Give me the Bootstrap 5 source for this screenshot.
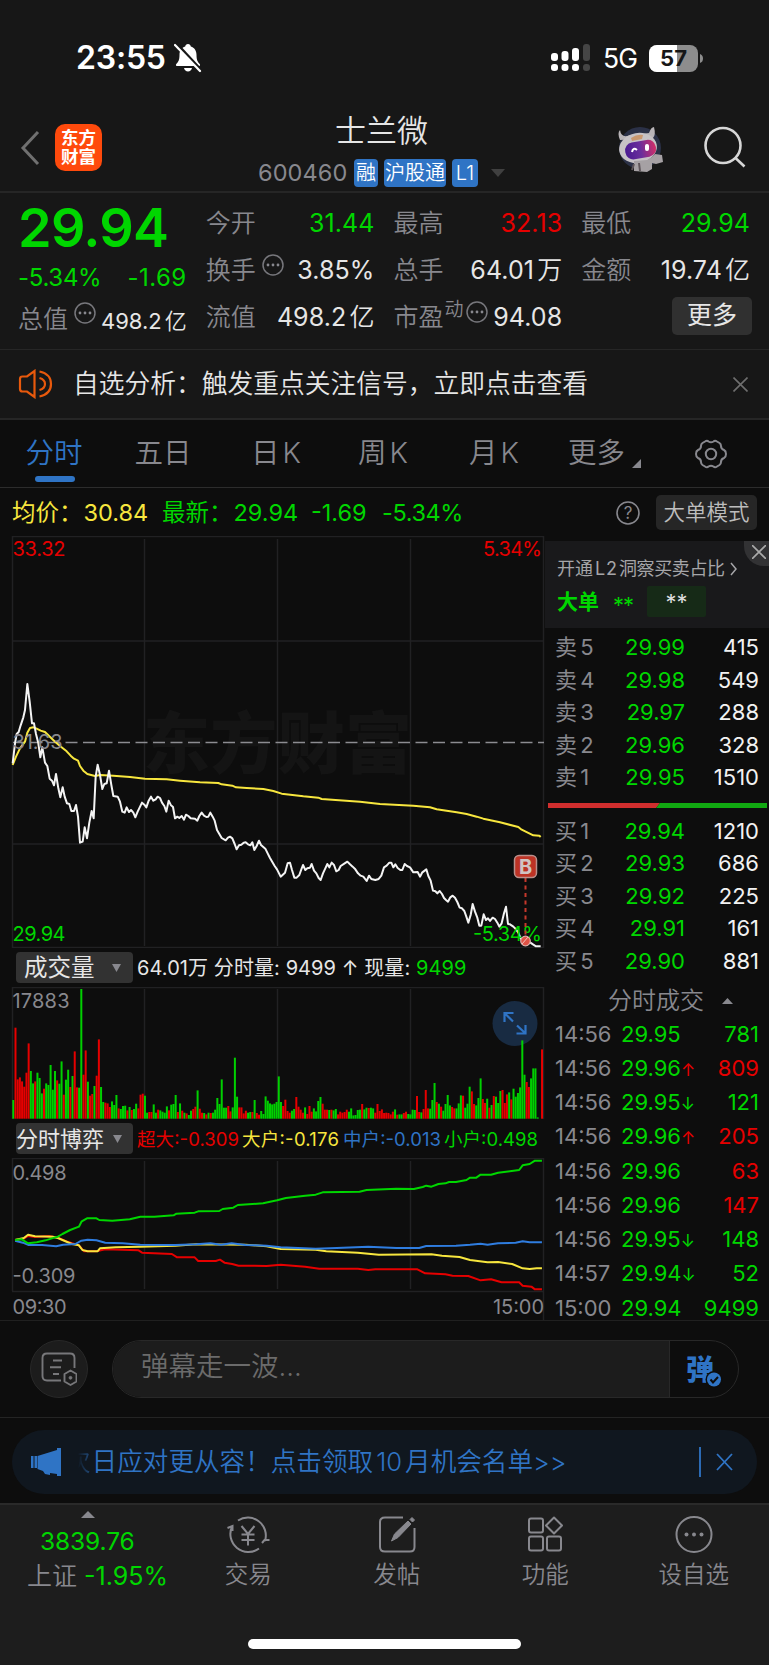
<!doctype html>
<html lang="zh-CN">
  <head>
    <meta charset="UTF-8">
    <meta name="viewport" content="width=device-width, initial-scale=1.0">
    <title>士兰微 600460</title>
    <link href="https://cdn.jsdelivr.net/npm/bootstrap@5.3.0/dist/css/bootstrap.min.css" rel="stylesheet">
    <style>
      body {
        background: #0d0d0d;
        color: #e6e6e6;
        font-family: Inter, "Noto Sans CJK SC", sans-serif;
        font-size: 25px;
        line-height: 1;
        overflow: hidden;
      }
      svg { display: block; flex: none; }
      svg text { font-family: Inter, "Noto Sans CJK SC", sans-serif; }
      .up { color: #e60000; }
      .down { color: #00d600; }
      .muted { color: #88888e; }
      .blue { color: #2f74c5; }
      .yellow { color: #f7e63e; }
      .panel { background: #171717; }

      /* durum + başlık */
      .status-bar { height: 108px; padding: 8px 66px 0 76px; }
      .clock { font-size: 32px; font-weight: 600; letter-spacing: -.2px; }
      .net { font-size: 26.5px; letter-spacing: -1px; margin: 1px 12px 0; }
      .title-bar { height: 85px; border-bottom: 2px solid #262626; padding: 0 23px 0 20px; }
      .logo { width: 47px; height: 47px; border-radius: 10px; background: #ff4a0c; color: #fff; font-weight: 700; font-size: 17.5px; line-height: 19px; padding-top: 4px; margin: 16px 0 0 14px; }
      .stock-name { font-size: 31px; line-height: 34px; font-weight: 350; padding: 6px 0 0 77px; }
      .code { font-size: 23.5px; letter-spacing: .1px; width: 96px; }
      .tag { background: #2f74c5; color: #fff; border-radius: 4px; height: 28px; line-height: 28px; font-size: 20px; font-weight: 350; }

      /* fiyat paneli */
      .quote { height: 157px; padding: 7px 19px 0 18px; gap: 19px; border-bottom: 1px solid #262626; }
      .quote > div { flex: 1 1 0; min-width: 0; }
      .q-row { height: 47px; display: flex; align-items: center; justify-content: space-between; font-size: 25px; letter-spacing: .1px; white-space: nowrap; }
      .q-row .muted { font-weight: 350; letter-spacing: 0; }
      .unit { margin-left: 3px; font-weight: 350; }
      .q-price { font-size: 54px; font-weight: 600; height: 54px; line-height: 56px; letter-spacing: -.7px; }
      .more-btn { width: 80px; height: 38px; line-height: 37px; background: #303030; border-radius: 5px; font-size: 25px; margin: 3px -2px 0 0; }

      .notice { height: 70px; border-bottom: 2px solid #262626; padding: 0 21px 0 18px; }
      .notice-text { font-size: 25.75px; margin-left: 20px; font-weight: 350; }

      .tabs { height: 68px; display: grid; grid-template-columns: 108px 110px 116px 98px 124px 97px 116px; border-bottom: 1px solid #2c2c2c; font-size: 28.5px; font-weight: 350; }
      .tabs > div { display: flex; align-items: center; justify-content: center; position: relative; }
      .tabs .active::after { content: ""; position: absolute; left: 35px; bottom: 5px; width: 40px; height: 6px; border-radius: 3px; background: #2f74c5; }

      .avg-line { height: 48px; padding: 1px 12px 0; font-size: 23.5px; white-space: pre; }
      .mode-btn { width: 101px; height: 35px; line-height: 34px; background: #262626; border-radius: 5px; font-size: 21.5px; font-weight: 350; color: #bdbdbd; }

      /* grafikler */
      .charts { width: 545px; flex: none; }
      .chart-head { height: 39px; padding-left: 16px; white-space: pre; font-size: 20px; }
      .picker { width: 117px; height: 31px; background: #323232; border-radius: 4px; font-size: 23.5px; }
      .vol-text { margin-left: 4px; letter-spacing: .08px; }
      .grid { stroke: #212123; stroke-width: 1.5; fill: none; }
      .line { fill: none; stroke-width: 2; stroke-linejoin: round; vector-effect: non-scaling-stroke; }

      /* emir defteri */
      .book { width: 224px; flex: none; }
      .l2 { height: 87px; margin-top: 5px; background: #19191b; padding: 14px 0 0 12px; position: relative; }
      .l2-close { position: absolute; right: 0; top: 0; width: 25px; height: 25px; background: #323234; border-bottom-left-radius: 20px; }
      .l2-box { width: 59px; height: 31px; line-height: 33px; background: #162a17; color: #ddd; border-radius: 2px; font-size: 22px; }
      .b-row { height: 32.5px; padding: 0 10px; font-size: 22px; color: #f2f2f2; display: flex; align-items: center; }
      .b-row span:nth-child(1) { width: 56px; word-spacing: -3px; }
      .b-row span:nth-child(2) { width: 74px; text-align: right; }
      .b-row span:nth-child(3) { flex: 1; text-align: right; }
      .b-row.t-row { height: 34.25px; }
      .t-row span:nth-child(1) { width: 66px; }
      .t-row span:nth-child(2) { width: auto; text-align: left; }
      .arrow { font-size: 17px; }
      .trades-head { height: 31px; margin-top: 8.5px; font-size: 24px; font-weight: 350; padding-left: 27px; }
      #trades { margin-bottom: -4.75px; }

      .danmu { height: 98px; border-top: 1px solid #202020; border-bottom: 1px solid #242424; padding: 0 30px; }
      .round-btn { width: 58px; height: 58px; background: #1c1c1c; border: 1px solid #282828; }
      .danmu-pill { width: 627px; height: 58px; border: 1px solid #282828; background: #0d0d0d; overflow: hidden; }
      .danmu-input { width: 558px; height: 56px; line-height: 51px; padding-left: 28px; background: #1c1c1c; color: #6b6b6b; font-size: 27.5px; font-weight: 350; border-right: 1px solid #282828; }

      .banner-wrap { height: 85px; padding: 12px 12px 0; }
      .banner { height: 64px; background: #10171f; padding: 0 23px 0 19px; }
      .banner-text { font-size: 25.6px; font-weight: 350; white-space: nowrap; }
      .fade-char { margin-left: 2px; -webkit-mask: linear-gradient(to right, transparent 50%, rgba(0,0,0,.6)); }

      .bottom-nav { height: 162px; background: #1d1d1d; border-top: 2px solid #2a2a2a; display: grid; grid-template-columns: 174px repeat(4, 148.5px); grid-template-rows: 98px 1fr; font-size: 23.5px; color: #88888e; }
      .nav-cell { display: flex; flex-direction: column; align-items: center; padding-top: 10px; font-weight: 350; }
      .nav-cell span { margin-top: 8px; }
      .index-value { margin: 11px 0 0 40px; font-size: 24.5px; letter-spacing: -.1px; }
      .index-rate { margin: 10px 0 0 27px; font-size: 25px; white-space: nowrap; }
      .home-bar { grid-column: 1 / -1; width: 273px; height: 10px; border-radius: 5px; background: #fff; margin: 36px 0 0 248px; }
    </style>
  </head>
  <body>

    <div class="panel">
      <div class="status-bar d-flex align-items-center text-white">
        <span class="clock">23:55</span>
        <svg class="ms-2" width="28" height="30" viewBox="0 0 28 30">
          <path d="M14 1c1.600 0 2.600 1 2.800 2.500 3.700 1.200 5.700 4.300 5.700 8.200 0 5.300 1.200 7.300 3.200 9.200.8.800.300 2.100-.9 2.100H3.200c-1.200 0-1.700-1.300-.9-2.100 2-1.900 3.200-3.900 3.200-9.200 0-3.900 2-7 5.700-8.200C11.400 2 12.400 1 14 1z" fill="#fff"/>
          <path d="M10 25h8c-.5 2.200-2 3.500-4 3.500s-3.500-1.300-4-3.500z" fill="#fff"/>
          <path d="M3 1l25 27" stroke="#171717" stroke-width="2.600"/>
          <path d="M1 2l25 26" stroke="#fff" stroke-width="2.200" stroke-linecap="round"/>
        </svg>
        <svg class="ms-auto" width="40" height="28" viewBox="0 0 40 28">
          <g fill="#fff"><rect x="0" y="9" width="7" height="8" rx="3"/><rect x="0" y="20" width="7" height="7" rx="3"/><rect x="10.500" y="7" width="7" height="10" rx="3"/><rect x="10.500" y="20" width="7" height="7" rx="3"/><rect x="21" y="4" width="7" height="13" rx="3"/><rect x="21" y="20" width="7" height="7" rx="3"/></g>
          <g fill="#454545"><rect x="32" y="0" width="7" height="17" rx="3"/><rect x="32" y="20" width="7" height="7" rx="3"/></g>
        </svg>
        <span class="net">5G</span>
        <svg width="54" height="27" viewBox="0 0 54 27">
          <clipPath id="bat"><rect width="49" height="27" rx="8"/></clipPath>
          <g clip-path="url(#bat)"><rect width="49" height="27" fill="#8d8d8d"/><rect width="28" height="27" fill="#fff"/></g>
          <path d="M51 9q3 1 3 4.500T51 18z" fill="#8d8d8d"/>
          <text x="11" y="21" font-size="21" font-weight="700" fill="#171717" textLength="27" lengthAdjust="spacingAndGlyphs">57</text>
        </svg>
      </div>

      <div class="title-bar d-flex">
        <svg width="21" height="36" viewBox="0 0 21 36" style="margin-top:22px"><path d="M18 2L3 18l15 16" fill="none" stroke="#707070" stroke-width="3"/></svg>
        <div class="logo text-center">东方<br>财富</div>
        <div class="flex-grow-1" style="padding-left:156px">
          <div class="stock-name">士兰微</div>
          <div class="d-flex align-items-center muted" style="margin-top:11px">
            <span class="code">600460</span>
            <span class="tag text-center" style="width:24px">融</span>
            <span class="tag text-center" style="width:62px;margin:0 6px">沪股通</span>
            <span class="tag text-center" style="width:26px">L1</span>
            <svg width="14" height="8" style="margin-left:13px"><path d="M0 0h14L7 8z" fill="#404040"/></svg>
          </div>
        </div>
        <svg width="48" height="46" viewBox="0 0 48 46" style="margin:18px 39px 0 0">
          <circle cx="23" cy="22" r="21" fill="#2b3147"/>
          <path d="M3 14Q0 7 3 4q1 7 7 6l22-3q2-6 5-6 2 8-1 11z" fill="#b9b5b8"/>
          <ellipse cx="21" cy="22" rx="19" ry="15" transform="rotate(-10 21 22)" fill="#c6c2c5"/>
          <path d="M14 12q6-4 12-3l-1 4-10 2z" fill="#c9986f"/>
          <defs><linearGradient id="visor" x1="0" x2="1"><stop offset="0" stop-color="#4a1a91"/><stop offset=".5" stop-color="#6a2f9c"/><stop offset="1" stop-color="#d32e68"/></linearGradient></defs>
          <rect x="8" y="15" width="31" height="17" rx="8" transform="rotate(-10 24 23)" fill="url(#visor)"/>
          <path d="M15 26q1-5 5-2" fill="none" stroke="#fff" stroke-width="2"/><rect x="28" y="18" width="4" height="7" rx="2" fill="#fff"/>
          <path d="M17 35l13-1 5-3 3-3 7 1 1 7-7 2-4-1v6l-5 3-13-1z" fill="#a6a1a4"/>
          <path d="M17 38l-2 6M22 37l1 8" stroke="#5f565a" stroke-width="2"/>
        </svg>
        <svg width="42" height="43" viewBox="0 0 42 43" style="margin-top:18px"><circle cx="19" cy="19.500" r="17.500" fill="none" stroke="#d6d6d6" stroke-width="2.600"/><path d="M31.500 32l9 8.500" stroke="#d6d6d6" stroke-width="2.600"/></svg>
      </div>

      <div class="quote d-flex">
        <div>
          <div class="q-price down">29.94</div>
          <div class="q-row down" style="font-size:24px"><span style="letter-spacing:-.3px">-5.34%</span><span style="letter-spacing:.5px">-1.69</span></div>
          <div class="q-row" style="height:36px"><span class="muted">总值</span><svg width="24" height="24" viewBox="0 0 24 24" style="margin:-12px 2px 0 2px"><use href="#dots"/></svg><span style="font-size:22px;padding-top:4px;letter-spacing:0">498.2<span class="unit">亿</span></span></div>
        </div>
        <div>
          <div class="q-row"><span class="muted">今开</span><span class="down">31.44</span></div>
          <div class="q-row"><span class="muted">换手</span><svg class="me-auto" width="24" height="24" viewBox="0 0 24 24" style="margin:-12px 0 0 5px"><use href="#dots"/></svg><span>3.85%</span></div>
          <div class="q-row"><span class="muted">流值</span><span>498.2<span class="unit">亿</span></span></div>
        </div>
        <div>
          <div class="q-row"><span class="muted">最高</span><span class="up">32.13</span></div>
          <div class="q-row"><span class="muted">总手</span><span>64.01<span class="unit">万</span></span></div>
          <div class="q-row"><span class="muted">市盈</span><span class="muted" style="font-size:19px;margin:-16px 0 0 1px">动</span><svg width="24" height="24" viewBox="0 0 24 24" style="margin:-11px auto 0 1px"><use href="#dots"/></svg><span>94.08</span></div>
        </div>
        <div>
          <div class="q-row"><span class="muted">最低</span><span class="down">29.94</span></div>
          <div class="q-row"><span class="muted">金额</span><span>19.74<span class="unit">亿</span></span></div>
          <div class="more-btn text-center ms-auto">更多</div>
        </div>
      </div>

      <div class="notice d-flex align-items-center">
        <svg width="35" height="30" viewBox="0 0 35 30" fill="none" stroke="#e8590c" stroke-width="2.200"><path d="M16.500 2v26L9 22.500H4.500Q2 22.500 2 20V10q0-2.500 2.500-2.500H9zM21.500 9q5.500 1.500 5.500 6t-5.500 6M21.500 2.500Q33 5 33 15T21.500 27.500"/></svg>
        <span class="notice-text">自选分析：触发重点关注信号，立即点击查看</span>
        <svg class="ms-auto" width="15" height="15" viewBox="0 0 15 15"><path d="M.5.500l14 14M14.500.500l-14 14" stroke="#6e6e6e" stroke-width="1.600"/></svg>
      </div>
    </div>

    <div class="tabs muted">
      <div class="active blue">分时</div>
      <div>五日</div>
      <div>日<span style="margin-left:3px">K</span></div>
      <div>周<span style="margin-left:3px">K</span></div>
      <div>月<span style="margin-left:3px">K</span></div>
      <div>更多<svg width="9" height="9" style="margin:19px 0 0 7px"><path d="M9 0v9H0z" fill="#88888e"/></svg></div>
      <div><svg width="32" height="30" viewBox="0 0 32 30" fill="none" stroke="#88888e" stroke-width="2"><path d="M10 2.500Q12 1 13.500 2.500q2.500 1.500 5 0Q20 1 22 2.500l2.500 1.500q1.500 1 1.500 3 0 3 3 4 2 1 2 4t-2 4q-3 1-3 4 0 2-1.500 3L22 27.500q-2 1.500-3.500 0-2.500-1.500-5 0-1.500 1.500-3.500 0L7.500 26Q6 25 6 23q0-3-3-4-2-1-2-4t2-4q3-1 3-4 0-2 1.500-3z"/><circle cx="16" cy="15" r="5.200"/></svg></div>
    </div>

    <div class="avg-line d-flex align-items-center">
      <span class="yellow" style="width:150px">均价：<span style="margin-left:1px">30.84</span></span><span class="down" style="width:149px">最新：<span style="margin-left:1px">29.94</span></span><span class="down" style="width:71px">-1.69</span><span class="down" style="letter-spacing:-.4px">-5.34%</span>
      <svg class="ms-auto" width="24" height="24" viewBox="0 0 24 24" style="margin-right:16px"><circle cx="12" cy="12" r="11" fill="none" stroke="#88888e" stroke-width="1.600"/><text x="12" y="18" text-anchor="middle" font-size="17" fill="#88888e">?</text></svg>
      <div class="mode-btn text-center">大单模式</div>
    </div>

    <div class="d-flex">
      <div class="charts">
        <!-- dakikalık fiyat -->
        <svg width="545" height="412" viewBox="0 536 545 412">
          <text x="143" y="768" font-size="67" font-weight="900" fill="#141414" textLength="269">东方财富</text>
          <path class="grid" d="M12 536.500h532M12.500 536v412M12 947.500h532M543.500 536v412M12 641h531M12 844h531M144.500 539v407M277.500 539v407M410.500 539v407"/>
          <path d="M12 742.500h532" stroke="#8c8c91" stroke-width="1.600" stroke-dasharray="12 5.500" stroke-dashoffset="-1"/>
          <g transform="translate(0 530) scale(.33333)">
            <polyline class="line" stroke="#f7e63e" points="38,705 48,680 60,655 75,635 82,608 90,594 100,592 110,596 122,602 135,606 148,619 162,632 180,648 200,664 212,677 222,686 234,692 240,708 250,722 262,732 285,738 300,735 340,737 390,741 435,746 500,748 540,752 600,757 655,759 665,763 697,767 708,772 740,774 790,777 820,783 845,791 910,799 955,803 965,807 1080,815 1140,822 1240,827 1290,832 1310,838 1370,847 1400,852 1430,860 1450,866 1500,877 1555,891 1565,899 1600,916 1618,917 1622,921"/>
            <polyline class="line" stroke="#f4f4f4" points="38,700 45,640 50,612 56,606 62,586 70,562 75,540 82,462 89,515 96,580 102,580 108,612 115,640 121,682 127,652 135,698 142,708 149,746 156,752 162,766 168,732 175,775 181,802 188,772 194,800 201,820 208,822 214,843 222,843 228,825 234,860 240,938 248,935 254,892 261,925 268,878 275,843 281,865 287,740 293,704 300,735 307,777 313,762 320,760 327,722 334,765 340,798 353,800 360,815 367,845 374,848 380,832 387,846 393,840 400,848 406,862 413,845 426,818 433,824 439,832 446,812 453,800 460,812 467,808 473,800 480,804 486,818 493,828 499,845 506,812 513,826 519,831 525,865 532,860 538,864 545,858 552,869 558,854 565,858 572,865 585,866 592,872 598,858 605,848 612,857 619,861 625,860 631,848 638,860 644,872 651,900 658,912 665,924 677,931 684,923 690,920 697,925 704,942 710,958 717,946 724,944 731,938 737,937 744,943 751,946 757,937 763,960 770,948 777,932 783,945 796,956 803,970 810,984 817,996 824,1008 831,1018 842,1040 855,1028 863,1000 870,998 876,1020 883,1043 890,1043 898,1035 904,1018 909,1005 916,1020 922,1015 930,1013 935,1002 942,1022 949,1030 956,1044 962,1050 969,1030 976,1015 982,1002 988,1012 995,998 1002,1005 1009,1024 1016,1020 1022,1008 1034,1000 1042,995 1050,1003 1058,1010 1066,1018 1074,1030 1082,1037 1090,1040 1100,1053 1107,1037 1114,1047 1126,1050 1136,1047 1144,1037 1152,1012 1160,1007 1168,998 1174,998 1180,1012 1186,1003 1193,1014 1201,1020 1207,1020 1214,1002 1221,1008 1230,1012 1240,1027 1253,1026 1260,1040 1267,1027 1279,1018 1285,1038 1292,1052 1299,1082 1306,1084 1312,1090 1319,1083 1326,1092 1332,1104 1338,1110 1344,1115 1351,1102 1358,1097 1365,1103 1372,1116 1379,1133 1386,1135 1393,1143 1399,1160 1405,1178 1412,1155 1418,1122 1425,1145 1432,1163 1438,1187 1444,1187 1451,1153 1458,1170 1464,1165 1470,1173 1478,1163 1485,1167 1492,1178 1498,1190 1505,1180 1512,1150 1518,1130 1524,1182 1530,1183 1540,1190 1548,1198 1555,1208 1562,1225 1570,1235 1590,1237 1600,1244 1608,1249 1622,1249"/>
          </g>
          <g font-size="20">
            <text x="12.500" y="556" fill="#e60000" textLength="53">33.32</text>
            <text x="542" y="556" fill="#e60000" text-anchor="end" textLength="59">5.34%</text>
            <text x="12.500" y="749" fill="#88888e" textLength="50">31.63</text>
            <text x="12.500" y="941" fill="#00d600" textLength="53">29.94</text>
            <text x="542" y="941" fill="#00d600" text-anchor="end" textLength="69">-5.34%</text>
          </g>
          <path d="M525.500 878v58" stroke="#c5382c" stroke-width="2" stroke-dasharray="4 3.500"/>
          <rect x="514.500" y="855.500" width="22" height="22" rx="4.500" fill="#bd3325" stroke="#b9908c" stroke-width="1.500"/>
          <text x="525.500" y="873.500" text-anchor="middle" font-size="20" font-weight="700" fill="#d0c3c2">B</text>
          <circle cx="525.500" cy="941" r="4.800" fill="#e05245" stroke="#ddb0ab" stroke-width="1.200"/><path d="M522 944l6-7" stroke="#f3c2bd"/>
        </svg>

        <div class="chart-head d-flex align-items-center">
          <div class="picker d-flex align-items-center justify-content-between px-2"><span style="white-space:nowrap">成交量</span><svg width="9" height="9" class="me-1"><path d="M0 1h9L4.500 9z" fill="#88888e"/></svg></div><span class="vol-text">64.01万 分时量: 9499 ↑ 现量: <span class="down">9499</span></span>
        </div>

        <!-- hacim -->
        <svg width="545" height="132" viewBox="0 987 545 132">
          <path class="grid" d="M12 987.500h532M12.500 987v132M543.500 987v132M144.500 989v128M277.500 989v128M410.500 989v128"/>
          <text x="12.500" y="1008" font-size="20" fill="#88888e" textLength="57">17883</text>
          <circle cx="515" cy="1023.500" r="22.500" fill="#182b42"/>
          <path d="M504.500 1022v-9h9M505.500 1014l7.500 7.500M525.500 1025v8.500h-9M517 1025.500l7.500 7" fill="none" stroke="#2f74c5" stroke-width="2.200"/>
          <g id="volBars"></g>
        </svg>

        <div class="chart-head d-flex align-items-center">
          <div class="picker d-flex align-items-center justify-content-between" style="font-size:22px"><span>分时博弈</span><svg width="9" height="9" style="margin-right:11px"><path d="M0 1h9L4.500 9z" fill="#88888e"/></svg></div><svg width="406" height="30" viewBox="0 0 406 30" style="margin-left:4px" font-size="18.500"><text x="0" y="22" fill="#e60000" textLength="102">超大:-0.309</text><text x="105" y="22" fill="#f7e63e" textLength="97">大户:-0.176</text><text x="206" y="22" fill="#2f74c5" textLength="98">中户:-0.013</text><text x="307" y="22" fill="#00d600" textLength="94">小户:0.498</text></svg>
        </div>

        <!-- sermaye akışı -->
        <svg width="545" height="162" viewBox="0 1158 545 162">
          <path class="grid" d="M12 1158.500h532M12.500 1158v133M12 1291.500h532M543.500 1158v162M144.500 1161v128M277.500 1161v128M410.500 1161v128"/>
          <g transform="translate(0 1120) scale(.35077 .33333)">
            <polyline class="line" stroke="#e60000" points="43,360 68,356 80,348 100,351 140,348 165,353 190,364 225,376 240,394 275,394 300,388 395,391 405,398 490,402 505,412 555,412 565,423 615,423 627,419 640,428 662,432 680,437 760,438 800,434 870,440 910,446 1020,446 1050,450 1070,448 1190,448 1212,460 1270,463 1290,467 1335,468 1370,481 1400,478 1430,487 1480,487 1490,497 1515,500 1525,508 1545,508"/>
            <polyline class="line" stroke="#f7e63e" points="43,360 68,354 80,344 100,349 150,350 165,354 178,360 205,372 225,376 235,390 250,394 278,394 285,385 330,382 400,380 500,377 560,373 700,374 760,379 800,387 900,389 930,394 1020,398 1080,404 1230,403 1260,407 1310,411 1340,420 1390,427 1420,426 1460,432 1490,445 1510,447 1530,445 1545,445"/>
            <polyline class="line" stroke="#2f7de0" points="43,362 65,368 82,375 120,375 160,379 180,374 215,372 232,362 250,359 275,361 300,368 350,370 400,374 500,375 560,373 600,370 630,374 660,370 700,375 760,377 800,382 900,386 960,384 1050,380 1130,384 1195,384 1215,378 1300,377 1340,374 1370,371 1390,374 1420,370 1470,368 1490,364 1510,367 1545,367"/>
            <polyline class="line" stroke="#00d600" points="43,360 62,358 80,370 105,367 130,361 155,353 165,350 178,342 200,330 225,320 233,304 248,295 275,295 283,300 320,302 370,298 400,290 440,290 495,286 503,281 555,278 565,274 625,273 635,267 665,263 678,255 750,250 790,241 815,234 870,227 900,224 920,217 1025,215 1045,210 1130,206 1180,207 1205,201 1215,197 1230,200 1250,192 1270,190 1280,186 1300,186 1330,180 1340,173 1358,173 1370,164 1400,164 1420,158 1480,150 1490,136 1510,132 1525,122 1545,122"/>
          </g>
          <g font-size="20" fill="#88888e">
            <text x="12.500" y="1180" textLength="54">0.498</text>
            <text x="12.500" y="1283" textLength="63">-0.309</text>
            <text x="12.500" y="1314" textLength="54">09:30</text>
            <text x="544" y="1314" text-anchor="end" textLength="51">15:00</text>
          </g>
        </svg>
      </div>

      <div class="book">
        <div class="l2">
          <div class="l2-close d-flex align-items-center justify-content-center"><svg width="14" height="14" viewBox="0 0 14 14" style="margin-left:4px;margin-top:-3px"><path d="M0 0l14 14M14 0L0 14" stroke="#aaa" stroke-width="1.600"/></svg></div>
          <svg width="190" height="28" viewBox="0 0 190 28"><g font-size="18" fill="#a5a5a8"><text x="0" y="20">开通</text><text x="38" y="20" textLength="22">L2</text><text x="62" y="20" textLength="106">洞察买卖占比</text></g><path d="M174 8l5 6-5 6" fill="none" stroke="#a5a5a8" stroke-width="1.500"/></svg>
          <div class="d-flex align-items-center down" style="margin-top:3px"><span class="fw-bold" style="font-size:21px">大单</span><span style="margin:6px 12px 0 14px;font-size:22px;width:22px;letter-spacing:-1px">**</span><span class="l2-box text-center">**</span></div>
        </div>
        <div id="sells" style="padding-top:3px"></div>
        <svg width="219" height="5" viewBox="0 0 219 5" style="margin:9px 0 7px 3px"><path d="M0 0h112l-4 5H0z" fill="#d02e2e"/><path d="M112 0h107v5H108z" fill="#11a811"/></svg>
        <div id="buys"></div>
        <div class="trades-head muted d-flex align-items-center justify-content-center">分时成交<svg width="11" height="6" style="margin-left:18px"><path d="M0 6L5.500 0 11 6z" fill="#88888e"/></svg></div>
        <div id="trades"></div>
      </div>
    </div>

    <div class="danmu d-flex align-items-center">
      <div class="round-btn rounded-circle d-flex align-items-center justify-content-center">
        <svg width="36" height="34" viewBox="0 0 36 34" fill="none" stroke="#77777a" stroke-width="1.900"><path d="M20 28.500H6q-4.500 0-4.500-4.500V6Q1.500 1.500 6 1.500h23q4.500 0 4.500 4.500v10M12 8.500h9M9 15.200h11M12 22h6"/><path d="M29.500 18.500l6 3.500v7.500l-6 3.500-6-3.500V22z" stroke-linejoin="round"/><circle cx="29.500" cy="25.800" r="1.400" fill="#77777a" stroke-width="1"/></svg>
      </div>
      <div class="danmu-pill rounded-pill d-flex ms-4">
        <div class="danmu-input">弹幕走一波...</div>
        <svg width="68" height="56" viewBox="0 0 68 56"><text x="16" y="38.500" font-size="28" font-weight="800" fill="#2f74c5">弹</text><circle cx="44" cy="38.500" r="8.500" fill="#0d0d0d"/><circle cx="44" cy="38.500" r="7" fill="#2f74c5"/><path d="M40.500 38.500l2.500 3 5-5.500" fill="none" stroke="#0d0d0d" stroke-width="2"/></svg>
      </div>
    </div>

    <div class="banner-wrap">
      <div class="banner rounded-pill d-flex align-items-center blue">
        <svg width="32" height="28" viewBox="0 0 32 28" fill="#2f74c5"><path d="M0 8h2.500v12H0zM3.500 8H6v12H3.500zM6.500 8L26 2V0h4v28h-4v-2l-7-1v2l-5-1-2-3-5.500-2z"/></svg>
        <span class="banner-text fade-char">次</span>
        <span class="banner-text" style="margin-left:1px">日应对更从容！点击领取<span style="margin:0 3px">10</span>月机会名单&gt;&gt;</span>
        <svg class="ms-auto" width="35" height="30" viewBox="0 0 35 30" stroke="#2f74c5" stroke-width="1.800"><path d="M1 0v30M18 7l15 16M33 7L18 23"/></svg>
      </div>
    </div>

    <nav class="bottom-nav">
      <div class="down">
        <svg width="14" height="7" style="margin:6px 0 0 81px"><path d="M0 7L7 0l7 7z" fill="#88888e"/></svg>
        <div class="index-value">3839.76</div>
        <div class="index-rate"><span class="muted" style="font-weight:350">上证</span> -1.95%</div>
      </div>
      <div class="nav-cell">
        <svg width="44" height="40" viewBox="0 0 44 40" fill="none" stroke="#88888e" stroke-width="2"><path d="M12 5.500A18 18 0 0 1 39 26M36 28l2.500-3h5M33 33.500A18 18 0 0 1 6 11.500M1.500 13l5-2v5"/><path d="M15.500 11l6.500 8 6.500-8M22 19v11.500M15.500 19.500h13M15.500 25h13"/></svg>
        <span>交易</span>
      </div>
      <div class="nav-cell">
        <svg width="40" height="40" viewBox="0 0 40 40" fill="none" stroke="#88888e" stroke-width="2"><path d="M26 2.500H8Q3 2.500 3 7v25q0 4.500 5 4.500h25q4.500 0 4.500-4.500V13"/><path d="M14.500 26l3-7L31 6l3 3-13 13.500zM33 4.500l2-2 2.500 2.500-2 2z" fill="#88888e" stroke-width="1"/></svg>
        <span>发帖</span>
      </div>
      <div class="nav-cell">
        <svg width="36" height="40" viewBox="0 0 36 40" fill="none" stroke="#88888e" stroke-width="2"><rect x="2" y="3.500" width="14" height="14" rx="2"/><rect x="2" y="21.500" width="14" height="14" rx="2"/><rect x="20" y="21.500" width="14" height="14" rx="2"/><path d="M27 2.500l8 8-8 8-8-8z" stroke-linejoin="round"/></svg>
        <span>功能</span>
      </div>
      <div class="nav-cell">
        <svg width="40" height="40" viewBox="0 0 40 40"><circle cx="20" cy="19.500" r="17.500" fill="none" stroke="#88888e" stroke-width="2"/><g fill="#88888e"><circle cx="12.500" cy="19.500" r="2"/><circle cx="20" cy="19.500" r="2"/><circle cx="27.500" cy="19.500" r="2"/></g></svg>
        <span>设自选</span>
      </div>
      <div class="home-bar"></div>
    </nav>

    <svg width="0" height="0"><defs><g id="dots"><circle cx="12" cy="12" r="10" fill="none" stroke="#77777c" stroke-width="1.500"/><g fill="#88888e"><circle cx="7" cy="12" r="1.400"/><circle cx="12" cy="12" r="1.400"/><circle cx="17" cy="12" r="1.400"/></g></g></defs></svg>

    <script>
      // hacim çubukları: renk + yükseklik (1/3 px)
      const volumes = 'g56 r273 r118 r124 r112 r96 r138 r226 g143 g106 r112 g138 g122 g76 r90 g106 g101 g161 g87 g143 r115 g105 g172 r72 g117 g147 r95 g128 r202 r94 g93 g389 r132 r205 g111 r69 r74 g98 r129 r238 g95 g50 r48 r46 r35 g52 g41 g71 r31 g29 g38 g39 r25 g35 r26 g29 g45 r31 r72 r75 g69 g18 r20 r20 g43 g18 r27 g25 g21 g18 g37 r25 g42 g44 g71 r20 g46 r24 g18 r16 g11 g24 r29 r36 g85 r30 r18 g17 r13 g18 r17 g18 g27 g62 g44 g118 g33 g33 r38 r22 g34 g183 g66 r34 r34 r16 r24 g18 g20 r20 g56 r17 r12 g23 g14 g67 g54 g46 g43 g45 g50 g127 g50 r38 r57 r23 r18 g24 g29 r65 r36 r27 r18 g34 r14 r38 r21 g31 g22 g53 g65 r45 r27 r27 g26 r27 g25 g29 r13 r21 r18 r20 r27 g21 g31 g10 g11 g26 g27 r44 g28 g33 r32 g33 g31 r18 r44 r23 r28 r17 r18 r17 r13 r21 g28 r12 g13 g13 r17 r21 g14 g13 g27 g26 r68 r20 g19 r29 r86 r31 g30 g56 g107 r50 g45 r36 g24 g44 g71 g40 r35 r31 g31 g46 g70 r69 g33 g45 g96 r82 r44 g40 g62 g121 r59 r47 g60 r33 g41 r68 g66 g47 g83 r86 r47 r73 g79 r58 g90 g66 g77 g94 g235 g132 r110 r95 g121 g151 g151 g4 g0 r208';
      document.getElementById('volBars').innerHTML = volumes.split(' ').map((v, i) => {
        const h = v.slice(1) / 3;
        return `<rect x="${(12.3 + i * 2.194).toFixed(2)}" y="${(1118.7 - h).toFixed(1)}" width="2" height="${h.toFixed(1)}" fill="${v[0] === 'r' ? '#e60000' : '#00d000'}"/>`;
      }).join('');

      const sells = [['卖 5', '29.99', 415], ['卖 4', '29.98', 549], ['卖 3', '29.97', 288], ['卖 2', '29.96', 328], ['卖 1', '29.95', 1510]];
      const buys = [['买 1', '29.94', 1210], ['买 2', '29.93', 686], ['买 3', '29.92', 225], ['买 4', '29.91', 161], ['买 5', '29.90', 881]];
      const trades = [
        ['14:56', '29.95', '', 781, 'down'],
        ['14:56', '29.96', '↑', 809, 'up'],
        ['14:56', '29.95', '↓', 121, 'down'],
        ['14:56', '29.96', '↑', 205, 'up'],
        ['14:56', '29.96', '', 63, 'up'],
        ['14:56', '29.96', '', 147, 'up'],
        ['14:56', '29.95', '↓', 148, 'down'],
        ['14:57', '29.94', '↓', 52, 'down'],
        ['15:00', '29.94', '', 9499, 'down']
      ];

      function bookRows(rows) {
        return rows.map(r => `<div class="b-row"><span class="muted">${r[0]}</span><span class="down">${r[1]}</span><span>${r[2]}</span></div>`).join('');
      }
      document.getElementById('sells').innerHTML = bookRows(sells);
      document.getElementById('buys').innerHTML = bookRows(buys);
      document.getElementById('trades').innerHTML = trades.map(t =>
        `<div class="b-row t-row"><span class="muted">${t[0]}</span><span class="down">${t[1]}<b class="arrow fw-normal ${t[4]}">${t[2]}</b></span><span class="${t[4]}">${t[3]}</span></div>`
      ).join('');
    </script>
    <script src="https://cdn.jsdelivr.net/npm/bootstrap@5.3.0/dist/js/bootstrap.bundle.min.js"></script>
  </body>
</html>
